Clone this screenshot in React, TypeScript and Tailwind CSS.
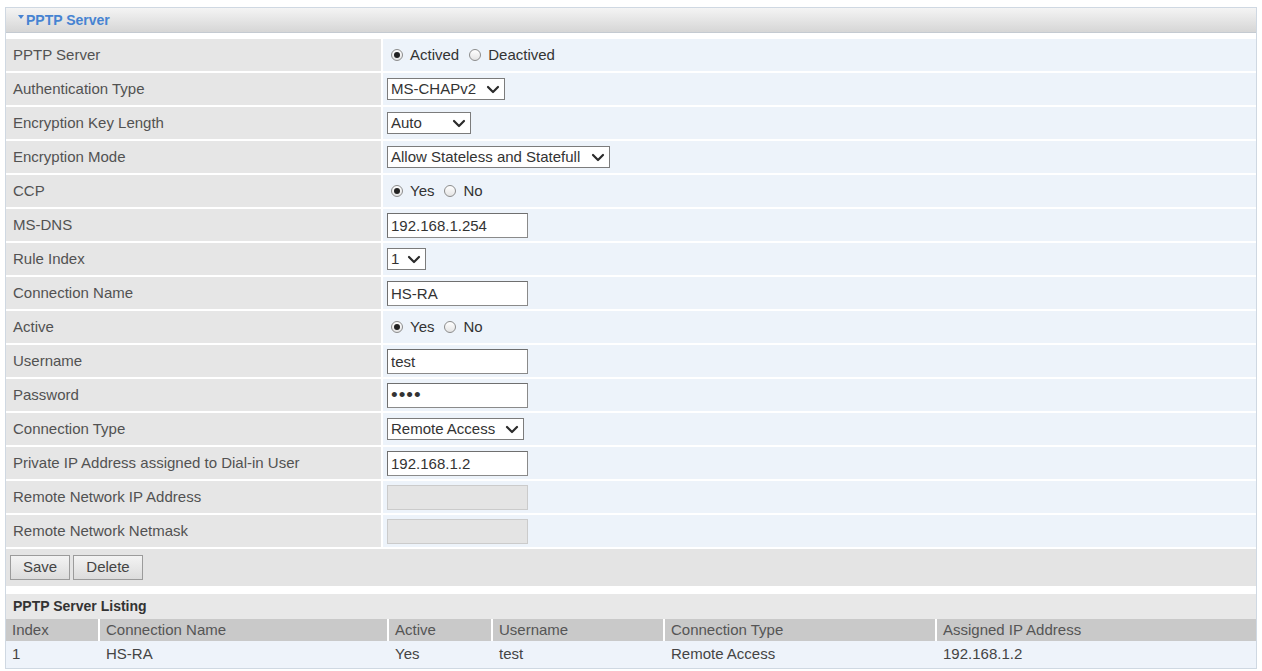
import React from "react";

type Field =
  | { kind: "radio"; options: string[]; checked: number }
  | { kind: "select"; value: string; width: string }
  | { kind: "input"; value: string; password?: boolean }
  | { kind: "disabled" };

const rows: { label: string; field: Field }[] = [
  { label: "PPTP Server", field: { kind: "radio", options: ["Actived", "Deactived"], checked: 0 } },
  { label: "Authentication Type", field: { kind: "select", value: "MS-CHAPv2", width: "w-[118px]" } },
  { label: "Encryption Key Length", field: { kind: "select", value: "Auto", width: "w-[84px]" } },
  { label: "Encryption Mode", field: { kind: "select", value: "Allow Stateless and Statefull", width: "w-[223px]" } },
  { label: "CCP", field: { kind: "radio", options: ["Yes", "No"], checked: 0 } },
  { label: "MS-DNS", field: { kind: "input", value: "192.168.1.254" } },
  { label: "Rule Index", field: { kind: "select", value: "1", width: "w-[39px]" } },
  { label: "Connection Name", field: { kind: "input", value: "HS-RA" } },
  { label: "Active", field: { kind: "radio", options: ["Yes", "No"], checked: 0 } },
  { label: "Username", field: { kind: "input", value: "test" } },
  { label: "Password", field: { kind: "input", value: "test", password: true } },
  { label: "Connection Type", field: { kind: "select", value: "Remote Access", width: "w-[137px]" } },
  { label: "Private IP Address assigned to Dial-in User", field: { kind: "input", value: "192.168.1.2" } },
  { label: "Remote Network IP Address", field: { kind: "disabled" } },
  { label: "Remote Network Netmask", field: { kind: "disabled" } },
];

const columns = [
  { title: "Index", value: "1", width: "w-[92px]" },
  { title: "Connection Name", value: "HS-RA", width: "w-[287px]" },
  { title: "Active", value: "Yes", width: "w-[102px]" },
  { title: "Username", value: "test", width: "w-[170px]" },
  { title: "Connection Type", value: "Remote Access", width: "w-[270px]" },
  { title: "Assigned IP Address", value: "192.168.1.2", width: "flex-1" },
];

const Radio = ({ on }: { on: boolean }) => (
  <span className="w-[12px] h-[12px] rounded-full border border-[#8c8c8c] bg-gradient-to-b from-white to-[#e4e4e4] flex items-center justify-center shrink-0">
    {on && <span className="w-[6px] h-[6px] rounded-full bg-[#222]" />}
  </span>
);

const Chevron = () => (
  <svg width="14" height="9" viewBox="0 0 14 9" className="shrink-0">
    <polyline points="2,2 7,7 12,2" fill="none" stroke="#2b2b2b" strokeWidth="2.2" strokeLinecap="round" strokeLinejoin="round" />
  </svg>
);

const FieldView = ({ field }: { field: Field }) => {
  if (field.kind === "radio") {
    return (
      <div className="flex items-center pl-[4px]">
        {field.options.map((opt, i) => (
          <label key={opt} className="flex items-center gap-[7px] mr-[10px]">
            <Radio on={i === field.checked} />
            <span>{opt}</span>
          </label>
        ))}
      </div>
    );
  }
  if (field.kind === "select") {
    return (
      <div className={`${field.width} h-[22px] border border-[#7c7c7c] bg-white flex items-center justify-between pl-[3px] pr-[4px]`}>
        <span className="whitespace-nowrap">{field.value}</span>
        <Chevron />
      </div>
    );
  }
  if (field.kind === "input") {
    return (
      <input
        readOnly
        type={field.password ? "password" : "text"}
        defaultValue={field.value}
        className={`w-[141px] h-[25px] border border-[#8a8a8a] border-t-[#6f6f6f] border-l-[#6f6f6f] bg-white px-[3px] text-[#333] outline-none ${
          field.password ? "text-[19px] tracking-[1px]" : "text-[15px]"
        }`}
      />
    );
  }
  return <div className="w-[141px] h-[25px] border border-[#cbcbcb] bg-[#e4e4e4]" />;
};

export default function App() {
  return (
    <div className="min-h-screen bg-white pt-[7px] px-[5px] font-['Liberation_Sans',Arial,sans-serif] text-[15px] text-[#333]">
      <div className="w-[1252px] border border-[#cfd8e2] bg-white">
        {/* header */}
        <div className="h-[25px] bg-gradient-to-b from-[#f4f4f4] to-[#d6d6d6] border-b border-[#c4cad1] flex items-center pl-[12px] gap-[2px] text-[#4683d2] font-bold text-[14px]">
          <svg width="6" height="4" viewBox="0 0 6 4" className="-mt-[6px]">
            <polygon points="0,0 6,0 3,4" fill="#4683d2" />
          </svg>
          <span>PPTP Server</span>
        </div>

        {/* form rows */}
        <div className="mt-[6px]">
          {rows.map((r) => (
            <div key={r.label} className="flex h-[34px] border-b-2 border-white">
              <div className="w-[377px] bg-[#e6e6e6] flex items-center pl-[7px] text-[#525252] border-r-2 border-white">
                {r.label}
              </div>
              <div className="flex-1 bg-[#edf3fa] flex items-center pl-[4px]">
                <FieldView field={r.field} />
              </div>
            </div>
          ))}
        </div>

        {/* buttons */}
        <div className="h-[37px] bg-[#e4e4e4] flex items-center pl-[4px] gap-[3px]">
          <button className="w-[60px] h-[25px] border border-[#9b9b9b] bg-gradient-to-b from-[#f3f3f3] to-[#dcdcdc] text-[#444]">
            Save
          </button>
          <button className="w-[70px] h-[25px] border border-[#9b9b9b] bg-gradient-to-b from-[#f3f3f3] to-[#dcdcdc] text-[#444]">
            Delete
          </button>
        </div>

        {/* listing */}
        <div className="mt-[8px] h-[25px] bg-[#e8e8e8] flex items-center pl-[7px] font-bold text-[#333] text-[14px]">
          PPTP Server Listing
        </div>
        <div className="flex h-[22px] gap-[2px] bg-white">
          {columns.map((c) => (
            <div key={c.title} className={`${c.width} bg-[#c9c9c9] flex items-center pl-[6px] text-[#555]`}>
              {c.title}
            </div>
          ))}
        </div>
        <div className="flex h-[27px] bg-[#eef3fa]">
          {columns.map((c, i) => (
            <div key={c.title} className={`${c.width} ${i < columns.length - 1 ? "mr-[2px]" : ""} flex items-center pl-[6px] text-[#444]`}>
              {c.value}
            </div>
          ))}
        </div>
      </div>
    </div>
  );
}
